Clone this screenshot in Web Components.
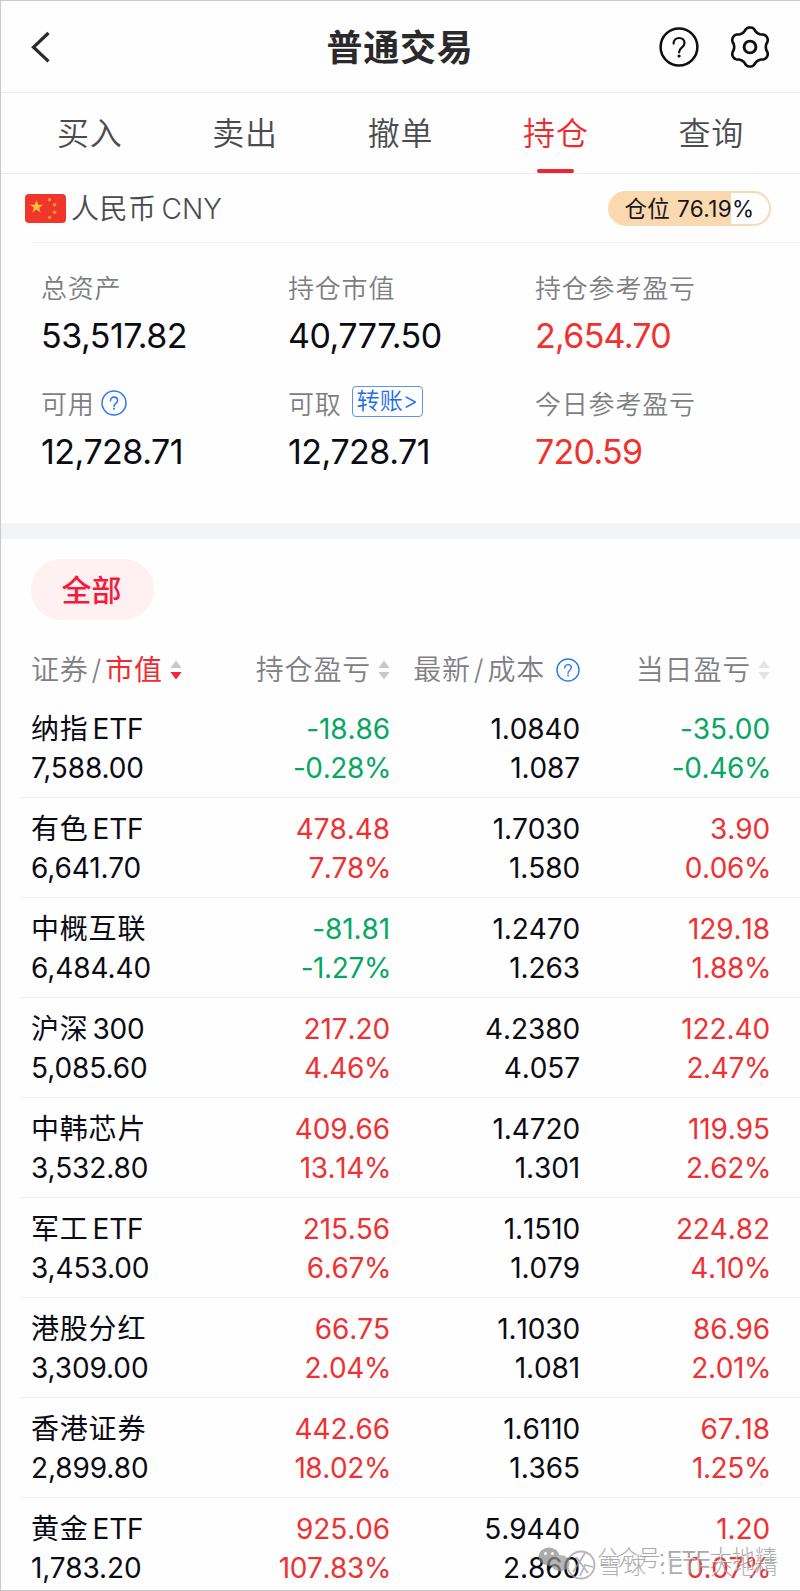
<!DOCTYPE html>
<html lang="zh-CN">
<head>
<meta charset="utf-8">
<meta name="viewport" content="width=device-width">
<title>普通交易</title>
<style>
  body {
    margin: 0;
    background: #fefefe;
    color: #0b0b14;
    font-family: Inter, "Noto Sans CJK SC", sans-serif;
  }
</style>
</head>
<body>
<trade-app></trade-app>

<script>
// attach an open shadow root filled from a template
function render(el, html) {
  const template = document.createElement('template');
  template.innerHTML = html;
  const root = el.attachShadow({mode: 'open'});
  root.appendChild(template.content.cloneNode(true));
  return root;
}

// six-toothed outline of the settings gear
function gearPath() {
  const points = [];
  for (let deg = 0; deg < 360; deg += 4) {
    const a = deg * Math.PI / 180;
    const wave = Math.cos(6 * (a - Math.PI / 2));
    const r = 17.7 + 1.9 * Math.sign(wave) * Math.pow(Math.abs(wave), 0.7);
    points.push((20 + r * Math.cos(a)).toFixed(2) + ' ' + (21 + r * Math.sin(a)).toFixed(2));
  }
  return 'M' + points.join('L') + 'z';
}

// circled question mark, used in three places
class HelpIcon extends HTMLElement {
  constructor() {
    super();
    render(this, `
      <style>
      :host { display: inline-flex; width: 26px; height: 26px; color: #2f7cf0; }
      svg { width: 100%; height: 100%; overflow: visible; }
      .ring { stroke-width: var(--stroke, 2.4); }
      .mark { stroke-width: var(--mark, 2.4); }
      </style>
      <svg viewBox="0 0 40 40" fill="none" stroke="currentColor">
        <circle class="ring" cx="20" cy="20" r="18.4"/>
        <path class="mark" d="M14.600 16.600c0-3.500 2.300-5.600 5.500-5.600s5.400 2 5.400 5c0 2.400-1.300 3.600-3 4.900-1.700 1.300-2.400 2.100-2.400 4.400" stroke-linecap="round"/>
        <circle cx="20.100" cy="29" r="1.600" fill="currentColor" stroke="none"/>
      </svg>`);
  }
}
customElements.define('help-icon', HelpIcon);

// up / down triangles next to a column title
class SortArrows extends HTMLElement {
  constructor() {
    super();
    render(this, `
      <style>
      :host { display: inline-flex; width: 12px; height: 20px; }
      path { fill: #c8c8cc; }
      :host([active]) .down { fill: #f5253c; }
      :host([faded]) path { fill: #e3e3e5; }
      </style>
      <svg width="12" height="20" viewBox="0 0 12 20">
        <path d="M6 0.500L11.600 8H0.400z"/>
        <path class="down" d="M6 19.500L11.600 12H0.400z"/>
      </svg>`);
  }
}
customElements.define('sort-arrows', SortArrows);

class NavHeader extends HTMLElement {
  constructor() {
    super();
    render(this, `
      <style>
      :host {
        display: grid;
        grid-template-columns: 1fr auto 1fr;
        align-items: center;
        height: 90px;
        padding: 1px 30px 0 28px;
        border-bottom: 1px solid #ededee;
      }
      h1 {
        margin: 0;
        padding: 2px 0 0 1px;
        font-size: 36px;
        font-weight: 700;
        letter-spacing: 0.8px;
        color: #2a2a2c;
        line-height: 52px;
      }
      .actions { display: flex; justify-content: flex-end; align-items: center; gap: 31px; }
      help-icon { width: 40px; height: 40px; color: #0d0d14; }
      </style>
      <svg width="24" height="32" viewBox="0 0 24 32" fill="none" stroke="#2a2a2c" stroke-width="3.200"><path d="M19.500 2L4.500 16.200 19.500 30.400"/></svg>
      <h1><slot></slot></h1>
      <div class="actions">
        <help-icon style="--stroke:2.5; --mark:2.2"></help-icon>
        <svg width="40" height="42" viewBox="0 0 40 42" fill="none" stroke="#0d0d14" stroke-width="2.600" stroke-linejoin="round">
          <path d="${gearPath()}"/>
          <circle cx="20" cy="21" r="5.900" stroke-width="2.900"/>
        </svg>
      </div>`);
  }
}
customElements.define('nav-header', NavHeader);

class TabItem extends HTMLElement {
  constructor() {
    super();
    render(this, `
      <style>
      :host {
        flex: 1;
        display: flex;
        flex-direction: column;
        align-items: center;
        justify-content: space-between;
        font-size: 32px;
        font-weight: 350;
        letter-spacing: 0.8px;
        line-height: 48px;
        color: #4c4c50;
        padding-top: 17px;
      }
      i { width: 37px; height: 4px; border-radius: 2px; }
      :host([active]) { color: #ee2a2f; }
      :host([active]) i { background: #ee2430; }
      </style>
      <span><slot></slot></span><i></i>`);
  }
}
customElements.define('tab-item', TabItem);

class TabBar extends HTMLElement {
  constructor() {
    super();
    render(this, `
      <style>
      :host { display: flex; height: 80px; padding: 0 11px; border-bottom: 1px solid #ededee; }
      </style>
      <slot></slot>`);
  }
}
customElements.define('tab-bar', TabBar);

class AccountBar extends HTMLElement {
  constructor() {
    super();
    render(this, `
      <style>
      :host {
        display: flex;
        align-items: center;
        height: 68px;
        padding: 0 29px 0 24px;
        font-size: 28px;
        font-weight: 350;
        color: #4c4c50;
      }
      .flag { margin-right: 5px; }
      .name { flex: 1; letter-spacing: 0.5px; line-height: 40px; margin-top: 1px; }
      .ratio {
        box-sizing: border-box;
        width: 163px;
        height: 35px;
        border: 2px solid #fbd9b0;
        border-radius: 18px;
        background: linear-gradient(90deg, #fbd9b0 76.190%, #fefefe 0);
        color: #15151c;
        font-size: 22.500px;
        font-weight: 400;
        line-height: 31px;
        letter-spacing: 0.4px;
        text-align: center;
        white-space: nowrap;
      }
      ::slotted(em) { font-style: normal; margin-left: 5px; letter-spacing: 0; }
      </style>
      <svg class="flag" width="41" height="29" viewBox="0 0 41 29">
        <rect width="41" height="29" rx="4" fill="#f0352b"/>
        <path fill="#fdc23a" d="M11.500 6l1.600 4.700h4.900l-3.900 3 1.500 4.800-4.100-2.900-4.100 2.900 1.500-4.800-3.900-3H9.900z"/>
        <g fill="#f99a34"><circle cx="24.500" cy="5.800" r="1.700"/><circle cx="29.600" cy="10.800" r="1.700"/><circle cx="29.600" cy="18.300" r="1.700"/><circle cx="24.500" cy="23.500" r="1.700"/></g>
      </svg>
      <span class="name"><slot></slot></span>
      <span class="ratio"><slot name="ratio"></slot></span>`);
  }
}
customElements.define('account-bar', AccountBar);

class MetricCell extends HTMLElement {
  constructor() {
    super();
    render(this, `
      <style>
      :host { display: block; }
      .label {
        display: flex;
        align-items: center;
        height: 40px;
        font-size: 26px;
        font-weight: 350;
        letter-spacing: 0.8px;
        color: #7e7e82;
      }
      .value { font-size: 34px; line-height: 48px; margin-top: 6px; letter-spacing: -0.5px; }
      :host([up]) .value { color: #f0322f; letter-spacing: -0.7px; }
      help-icon { margin: 2px 0 0 6px; }
      ::slotted(a) {
        box-sizing: border-box;
        height: 31px;
        margin: -1px 0 0 10px;
        padding: 0 4px;
        border: 1px solid #5c93f2;
        border-radius: 4px;
        color: #1f6cf0;
        font-size: 23px;
        line-height: 28px;
        letter-spacing: 0.1px;
      }
      </style>
      <div class="label"><slot name="label"></slot>${this.hasAttribute('help') ? '<help-icon></help-icon>' : ''}<slot name="action"></slot></div>
      <div class="value"><slot></slot></div>`);
  }
}
customElements.define('metric-cell', MetricCell);

class AssetSummary extends HTMLElement {
  constructor() {
    super();
    render(this, `
      <style>
      :host {
        display: grid;
        grid-template-columns: 247px 247px 1fr;
        grid-auto-rows: 92px;
        row-gap: 24px;
        box-sizing: border-box;
        height: 281px;
        margin-left: 31px;
        padding: 23px 0 0 9px;
        border-top: 1px solid #f2f2f3;
      }
      </style>
      <slot></slot>`);
  }
}
customElements.define('asset-summary', AssetSummary);

class FilterPill extends HTMLElement {
  constructor() {
    super();
    render(this, `
      <style>
      :host {
        display: flex;
        align-items: center;
        justify-content: center;
        box-sizing: border-box;
        width: 123px;
        height: 61px;
        margin: 20px 0 0 30px;
        padding: 0 2px 4px 0;
        border-radius: 31px;
        background: #fff0f2;
        color: #f5193a;
        font-size: 30px;
        font-weight: 500;
      }
      </style>
      <slot></slot>`);
  }
}
customElements.define('filter-pill', FilterPill);

// one security: four columns, two lines each
class HoldingRow extends HTMLElement {
  constructor() {
    super();
    this.root = render(this, `
      <style>
      :host {
        display: grid;
        grid-template-columns: 160px 199px 190px 190px;
        box-sizing: border-box;
        height: 100px;
        margin-left: 20px;
        padding: 12px 0 0 10px;
        border-bottom: 1px solid #f0f0f1;
        font-size: 28px;
        font-kerning: none;
        line-height: 39px;
      }
      :host(:last-of-type) { border-bottom: none; }
      div { text-align: right; white-space: nowrap; letter-spacing: -0.1px; }
      div:first-of-type { text-align: left; }
      .name { letter-spacing: 0.8px; }
      .worth { font-kerning: normal; }
      .latin { margin-left: 4px; letter-spacing: -0.3px; }
      .percent { letter-spacing: -0.4px; margin-right: -1px; }
      .up { color: #ee3233; }
      .down { color: #06a763; }
      </style>
      <div><span class="name"></span><br><span class="worth"></span></div>
      <div class="total"></div>
      <div class="price"></div>
      <div class="day"></div>`);
  }
  set item(row) {
    const [name, worth, total, price, day] = row;
    this.root.querySelector('.name').innerHTML = name.replace(/[A-Z0-9]+/, '<span class="latin">$&</span>');
    this.root.querySelector('.worth').textContent = worth;
    this.root.querySelector('.price').innerHTML = price.join('<br>');
    for (const [key, pair] of [['total', total], ['day', day]]) {
      const cell = this.root.querySelector('.' + key);
      cell.innerHTML = `${pair[0]}<br><span class="percent">${pair[1]}</span>`;
      cell.classList.add(pair[0].startsWith('-') ? 'down' : 'up');
    }
  }
}
customElements.define('holding-row', HoldingRow);

const holdings = [
  ['纳指ETF', '7,588.00', ['-18.86', '-0.28%'], ['1.0840', '1.087'], ['-35.00', '-0.46%']],
  ['有色ETF', '6,641.70', ['478.48', '7.78%'], ['1.7030', '1.580'], ['3.90', '0.06%']],
  ['中概互联', '6,484.40', ['-81.81', '-1.27%'], ['1.2470', '1.263'], ['129.18', '1.88%']],
  ['沪深300', '5,085.60', ['217.20', '4.46%'], ['4.2380', '4.057'], ['122.40', '2.47%']],
  ['中韩芯片', '3,532.80', ['409.66', '13.14%'], ['1.4720', '1.301'], ['119.95', '2.62%']],
  ['军工ETF', '3,453.00', ['215.56', '6.67%'], ['1.1510', '1.079'], ['224.82', '4.10%']],
  ['港股分红', '3,309.00', ['66.75', '2.04%'], ['1.1030', '1.081'], ['86.96', '2.01%']],
  ['香港证券', '2,899.80', ['442.66', '18.02%'], ['1.6110', '1.365'], ['67.18', '1.25%']],
  ['黄金ETF', '1,783.20', ['925.06', '107.83%'], ['5.9440', '2.860'], ['1.20', '0.07%']]
];

class HoldingTable extends HTMLElement {
  constructor() {
    super();
    const root = render(this, `
      <style>
      :host { display: block; }
      header {
        display: grid;
        grid-template-columns: 160px 199px 190px 190px;
        height: 78px;
        align-items: center;
        padding: 22px 0 0 30px;
        box-sizing: border-box;
        font-size: 28px;
        font-weight: 350;
        letter-spacing: 0.8px;
        color: #808084;
        line-height: 40px;
      }
      span { display: flex; align-items: center; justify-content: flex-end; white-space: nowrap; }
      span:first-child { justify-content: flex-start; }
      b { font-weight: 400; color: #f02b30; }
      u { text-decoration: none; margin: 0 3px; }
      sort-arrows { margin-left: 7px; }
      help-icon { width: 24px; height: 24px; margin-left: 11px; }
      </style>
      <header>
        <span>证券<u>/</u><b>市值</b><sort-arrows active></sort-arrows></span>
        <span>持仓盈亏<sort-arrows></sort-arrows></span>
        <span>最新<u>/</u>成本<help-icon></help-icon></span>
        <span>当日盈亏<sort-arrows faded></sort-arrows></span>
      </header>`);
    for (const row of holdings) {
      const el = document.createElement('holding-row');
      el.item = row;
      root.appendChild(el);
    }
  }
}
customElements.define('holding-table', HoldingTable);

// share stamps lying over the last row
class WaterMark extends HTMLElement {
  constructor() {
    super();
    render(this, `
      <style>
      :host {
        position: absolute;
        right: 20px;
        bottom: 8px;
        width: 242px;
        height: 36px;
        color: #858585;
        opacity: 0.7;
        font: 300 22.500px/26px "Liberation Sans", "Noto Sans CJK SC", sans-serif;
        white-space: nowrap;
      }
      svg { position: absolute; left: 0; top: 1px; }
      span { position: absolute; left: 59px; top: 0; display: flex; }
      span + span { top: 8px; left: 61px; color: #8f8f8f; text-shadow: -1px -1px 0 #fff; }
      b { display: flex; justify-content: space-between; box-sizing: border-box; font-weight: 300; width: 70px; padding-right: 4px; letter-spacing: -2px; }
      span + span b { width: 69px; letter-spacing: 2px; padding-right: 0; }
      </style>
      <svg width="60" height="34" viewBox="0 0 60 34">
        <ellipse cx="11" cy="9.500" rx="10.500" ry="9" fill="#888"/><ellipse cx="22" cy="16" rx="9.500" ry="8" fill="#999"/>
        <g fill="#fff"><circle cx="7.500" cy="6.500" r="1.500"/><circle cx="14.500" cy="6.500" r="1.500"/></g>
        <circle cx="43" cy="18" r="13.500" fill="none" stroke="#999" stroke-width="1.800"/>
        <path d="M35 25L47 6M42 29l5-11 8 2M38 10l12 16" fill="none" stroke="#999" stroke-width="1.800"/>
      </svg>
      <span><b>公众号<i style="font-style:normal">:</i></b>ETF大地精</span><span><b>雪球<i style="font-style:normal">:</i></b>ETF大地精</span>`);
  }
}
customElements.define('water-mark', WaterMark);

class TradeApp extends HTMLElement {
  constructor() {
    super();
    render(this, `
      <style>
      :host {
        display: block;
        position: relative;
        box-sizing: border-box;
        width: 800px;
        height: 1591px;
        overflow: hidden;
        border: 1px solid #c9c9cb;
        border-right: none;
      }
      .band { height: 16px; background: #f2f4f8; }
      </style>
      <nav-header>普通交易</nav-header>
      <tab-bar>
        <tab-item>买入</tab-item>
        <tab-item>卖出</tab-item>
        <tab-item>撤单</tab-item>
        <tab-item active>持仓</tab-item>
        <tab-item>查询</tab-item>
      </tab-bar>
      <account-bar>人民币<em>CNY</em><span slot="ratio">仓位 76.19%</span></account-bar>
      <asset-summary>
        <metric-cell><span slot="label">总资产</span>53,517.82</metric-cell>
        <metric-cell><span slot="label">持仓市值</span>40,777.50</metric-cell>
        <metric-cell up><span slot="label">持仓参考盈亏</span>2,654.70</metric-cell>
        <metric-cell help><span slot="label">可用</span>12,728.71</metric-cell>
        <metric-cell><span slot="label">可取</span><a slot="action">转账&gt;</a>12,728.71</metric-cell>
        <metric-cell up><span slot="label">今日参考盈亏</span>720.59</metric-cell>
      </asset-summary>
      <div class="band"></div>
      <filter-pill>全部</filter-pill>
      <holding-table></holding-table>
      <water-mark></water-mark>`);
  }
}
customElements.define('trade-app', TradeApp);
</script>
</body>
</html>
